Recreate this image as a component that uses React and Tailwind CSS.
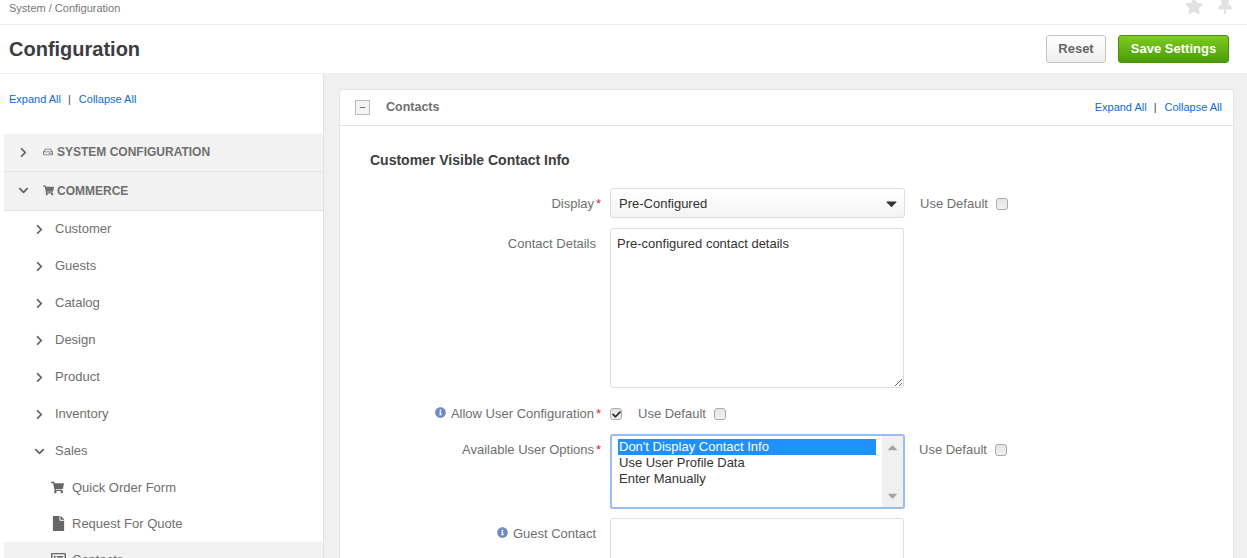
import React from 'react';
import { FaChevronRight, FaChevronDown, FaShoppingCart, FaFile, FaInfoCircle, FaStar, FaThumbtack, FaRegHdd, FaCaretDown, FaCheck, FaRegListAlt, FaCaretUp } from 'react-icons/fa';

const sections = ['Customer', 'Guests', 'Catalog', 'Design', 'Product', 'Inventory'];

const ExpandLinks = () => (
  <div className="text-[11px] text-[#0e6ad6]">
    <span>Expand All</span>
    <span className="ml-[7px] mr-[8px] text-[#444]">|</span>
    <span>Collapse All</span>
  </div>
);

const Checkbox = ({ checked }) => (
  <span className="flex h-[12px] w-[12px] items-center justify-center rounded-[3px] border border-[#aaa] bg-gradient-to-b from-[#e4e4e4] to-[#f2f2f2] text-[#333]">
    {checked && <FaCheck className="text-[9px]" />}
  </span>
);

const UseDefault = ({ className }) => (
  <div className={`flex items-center gap-[8px] text-[#6f6f6f] ${className}`}>
    <span>Use Default</span>
    <Checkbox />
  </div>
);

const Label = ({ children, required, info, className = '' }) => (
  <div className={`flex w-[270px] shrink-0 justify-end pr-[8px] text-[#6f6f6f] ${className}`}>
    {info && <FaInfoCircle className="mr-[5px] mt-[3px] text-[11px] text-[#6d8ac4]" />}
    <span>{children}</span>
    {required ? <span className="ml-[2px] w-[6px] text-[#d0284a]">*</span> : <span className="w-[6px]" />}
  </div>
);

const NavRow = ({ children, open }) => (
  <div className="flex h-[37px] items-center pl-[34px] text-[#6f6f6f]">
    <span className="w-[21px] text-[11px] text-[#666]">{open ? <FaChevronDown /> : <FaChevronRight />}</span>
    {children}
  </div>
);

const SubRow = ({ icon, children, className = '' }) => (
  <div className={`flex h-[36px] items-center pl-[51px] text-[#6f6f6f] ${className}`}>
    <span className="flex w-[21px] text-[#666]">{icon}</span>
    {children}
  </div>
);

const App = () => {
  return (
    <div className="flex h-screen flex-col overflow-hidden bg-white font-['Liberation_Sans',Arial,sans-serif] text-[13px]">
      {/* Breadcrumb */}
      <div className="flex h-[25px] shrink-0 items-start justify-between border-b border-[#eee] pl-[9px] pr-[13px] text-[11px] text-[#777]">
        <span>System / Configuration</span>
        <div className="-mt-[3px] flex gap-[13px] text-[18px] text-[#e2e2e2]">
          <FaStar />
          <FaThumbtack />
        </div>
      </div>

      {/* Title bar */}
      <div className="flex h-[49px] shrink-0 items-center justify-between border-b border-[#eee] pl-[9px] pr-[18px]">
        <h1 className="text-[20px] font-bold text-[#3d3d3d]">Configuration</h1>
        <div className="flex gap-[12px]">
          <button className="h-[28px] w-[60px] rounded-[3px] border border-[#c4c4c4] bg-gradient-to-b from-white to-[#eee] text-[13px] font-bold text-[#666]">Reset</button>
          <button className="h-[28px] w-[111px] rounded-[3px] border border-[#4a900d] bg-gradient-to-b from-[#7dcc1f] to-[#4b9c08] text-[13px] font-bold text-white">Save Settings</button>
        </div>
      </div>

      <div className="flex min-h-0 flex-1 bg-[#f0f0f0]">
        {/* Sidebar */}
        <aside className="w-[324px] shrink-0 overflow-hidden border-r border-[#e2e2e2] bg-white">
          <div className="pl-[9px] pt-[17px]">
            <ExpandLinks />
          </div>
          <div className="ml-[4px] mt-[26px]">
            <div className="flex h-[38px] items-center border-b border-[#e2e2e2] bg-[#f2f2f2] pl-[14px] text-[12px] font-bold text-[#6f6f6f]">
              <FaChevronRight className="mr-[14px] text-[11px] text-[#666]" />
              <FaRegHdd className="mr-[4px] text-[10px]" />
              SYSTEM CONFIGURATION
            </div>
            <div className="flex h-[39px] items-center border-b border-[#e2e2e2] bg-[#f2f2f2] pl-[14px] text-[12px] font-bold text-[#6f6f6f]">
              <FaChevronDown className="mr-[14px] text-[11px] text-[#666]" />
              <FaShoppingCart className="mr-[3px] text-[11px]" />
              COMMERCE
            </div>
          </div>
          {sections.map((name) => (
            <NavRow key={name}>{name}</NavRow>
          ))}
          <NavRow open>Sales</NavRow>
          <SubRow icon={<FaShoppingCart className="text-[13px]" />}>Quick Order Form</SubRow>
          <SubRow icon={<FaFile className="text-[15px]" />}>Request For Quote</SubRow>
          <div className="ml-[4px] bg-[#f2f2f2]">
            <SubRow icon={<FaRegListAlt className="text-[15px]" />} className="-ml-[4px]">Contacts</SubRow>
          </div>
        </aside>

        {/* Content */}
        <main className="min-w-0 flex-1 overflow-hidden pl-[15px] pr-[13px] pt-[15px]">
          <div className="h-full rounded-t-[3px] border border-b-0 border-[#e6e6e6] bg-white">
            <div className="flex h-[36px] items-center justify-between border-b border-[#e2e2e2] pl-[15px] pr-[11px]">
              <div className="flex items-center font-bold text-[#6f6f6f]">
                <span className="mr-[16px] flex h-[15px] w-[15px] items-center justify-center border border-[#bbb] bg-[#f4f4f4] text-[11px] font-normal leading-none text-[#555]">−</span>
                <span className="text-[12.5px]">Contacts</span>
              </div>
              <ExpandLinks />
            </div>

            <h2 className="ml-[30px] mt-[24px] text-[14px] font-bold text-[#3d3d3d]">Customer Visible Contact Info</h2>

            <div className="mt-[17px] flex flex-col">
              <div className="flex items-center">
                <Label required className="pt-[1px]">Display</Label>
                <div className="flex h-[30px] w-[295px] items-center justify-between rounded-[3px] border border-[#ddd] bg-gradient-to-b from-white to-[#f4f4f4] pl-[8px] pr-[4px] pt-[1px] text-[#333]">
                  <span>Pre-Configured</span>
                  <FaCaretDown className="text-[17px]" />
                </div>
                <UseDefault className="ml-[15px] pt-[1px]" />
              </div>

              <div className="mt-[10px] flex">
                <Label className="pt-[6px]"><span>Contact Details</span></Label>
                <textarea
                  readOnly
                  defaultValue="Pre-configured contact details"
                  className="h-[160px] w-[294px] rounded-[3px] border border-[#ddd] px-[6px] py-[5px] text-[13px] text-[#333] outline-none"
                />
              </div>

              <div className="mt-[18px] flex h-[16px] items-center">
                <Label required info>Allow User Configuration</Label>
                <Checkbox checked />
                <UseDefault className="ml-[16px]" />
              </div>

              <div className="mt-[12px] flex">
                <Label required className="pt-[6px]">Available User Options</Label>
                <div className="flex h-[75px] w-[295px] overflow-hidden rounded-[3px] border-2 border-[#9bbcf0] bg-white text-[#333]">
                  <div className="flex-1 pl-[6px] pr-[6px] pt-[3px] leading-[16px]">
                    <div className="bg-[#1e90ff] pl-[1px] text-white">Don't Display Contact Info</div>
                    <div className="pl-[1px]">Use User Profile Data</div>
                    <div className="pl-[1px]">Enter Manually</div>
                  </div>
                  <div className="flex w-[21px] flex-col items-center justify-between bg-[#f0f0f0] py-[4px] text-[15px] text-[#a5a5a5]">
                    <FaCaretUp />
                    <FaCaretDown />
                  </div>
                </div>
                <UseDefault className="ml-[14px] h-[32px]" />
              </div>

              <div className="mt-[9px] flex">
                <Label info className="pt-[6px]">Guest Contact</Label>
                <div className="h-[80px] w-[294px] rounded-[3px] border border-[#ddd]" />
              </div>
            </div>
          </div>
        </main>
      </div>
    </div>
  );
};

export default App;
